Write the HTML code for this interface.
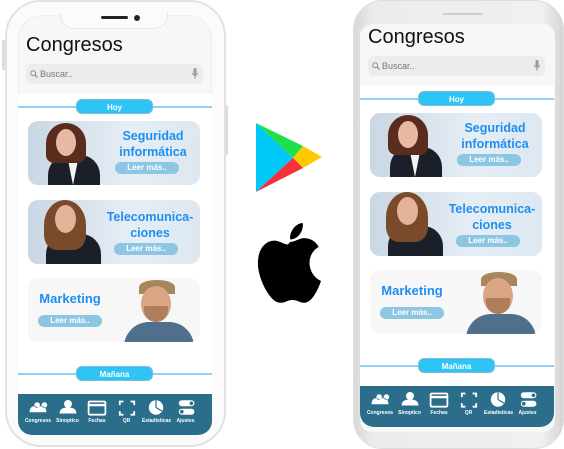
<!DOCTYPE html>
<html><head><meta charset="utf-8"><style>
*{margin:0;padding:0;box-sizing:border-box}
body{width:564px;height:449px;background:#fff;position:relative;overflow:hidden;font-family:"Liberation Sans",sans-serif}
.abs{position:absolute}
.scr{position:absolute;width:194px;height:405px}
.title{position:absolute;left:8px;top:4px;font-size:20px;color:#111}
.search{position:absolute;left:8px;top:34px;width:177px;height:20px;background:#ececec;border-radius:6px;font-size:9px;color:#777;padding:5px 0 0 14px}
.white{position:absolute;left:0;top:64px;width:194px;height:300px;background:#fff}
.line{position:absolute;left:0;width:194px;height:2px;background:#8fd0f5}
.pill{position:absolute;left:58px;width:77px;height:15px;background:#2ec4f5;border-radius:6px;color:#fff;font-size:8px;font-weight:bold;text-align:center;line-height:15px;border:1px solid #7fb9d8}
.card{position:absolute;left:10px;width:172px;height:64px;border-radius:10px;overflow:hidden;background:linear-gradient(90deg,#c9d7e4,#e6eef5 60%,#dce8f2)}
.card.w{background:#f7f7f8}
.ct{position:absolute;color:#1e8ff0;font-weight:bold;font-size:12.5px;text-align:center;line-height:16px}
.btn{position:absolute;height:12px;border-radius:6px;background:#8dc6e3;color:#fff;font-size:8px;font-weight:bold;text-align:center;line-height:12px}
.head{position:absolute;border-radius:50%}
.bar{position:absolute;left:0;top:364px;width:194px;height:41px;background:#2a6e8c;border-radius:0 0 14px 14px}
.ic{position:absolute;top:5px;width:28px;text-align:center;color:#fff;font-size:5px;font-weight:bold}
.ic svg{display:block;margin:0 auto 2px}
</style></head><body>

<div class="abs" style="left:5px;top:0;width:221px;height:447px;border:2px solid #e2e2e2;border-radius:36px;background:#fbfbfb"></div>
<div class="abs" style="left:2px;top:40px;width:3px;height:30px;background:#ddd"></div>
<div class="abs" style="left:225px;top:105px;width:3px;height:50px;background:#ddd"></div>
<div class="abs" style="left:18px;top:15px;width:194px;height:420px;background:#f7f7f7;border-radius:24px;overflow:hidden;border:1px solid #eee"></div>
<div class="abs" style="left:60px;top:13px;width:108px;height:16px;background:#fbfbfb;border-radius:0 0 14px 14px;border:1px solid #e6e6e6;border-top:none"></div>
<div class="abs" style="left:101px;top:16px;width:27px;height:3px;background:#222;border-radius:2px"></div>
<div class="abs" style="left:134px;top:15px;width:6px;height:6px;background:#223;border-radius:50%"></div>

<div class="abs" style="left:353px;top:0;width:211px;height:449px;border-radius:30px;background:linear-gradient(90deg,#d8d8d8,#ececec 10%,#f0f0f0 90%,#d5d5d5);border:1px solid #ddd"></div>
<div class="abs" style="left:443px;top:13px;width:40px;height:2px;background:#ccc;border-radius:1px"></div>
<div class="abs" style="left:360px;top:24px;width:195px;height:408px;background:#f7f7f7;border-radius:12px"></div>

<div class="scr" style="left:18px;top:30px" id="s1">
<div class="title">Congresos</div>
<div class="search"><svg class="abs" style="left:4px;top:6px" width="8" height="8" viewBox="0 0 8 8"><circle cx="3.2" cy="3.2" r="2.4" fill="none" stroke="#888" stroke-width="1"/><path d="M5 5L7.5 7.5" stroke="#888" stroke-width="1.2"/></svg>Buscar..<svg class="abs" style="right:5px;top:4px" width="6" height="12" viewBox="0 0 6 12"><rect x="1.5" y="0" width="3" height="7" rx="1.5" fill="#999"/><path d="M.5 5a2.5 2.5 0 0 0 5 0M3 8v3" stroke="#999" fill="none"/></svg></div>
<div class="white"></div>
<div class="line" style="top:76px"></div><div class="pill" style="top:69px">Hoy</div>
<div class="card" style="top:91px">
 <div class="abs" style="left:20px;top:34px;width:52px;height:40px;background:#1b1f2a;border-radius:20px 20px 0 0"></div>
 <div class="abs" style="left:39px;top:34px;width:12px;height:30px;background:#f4f4f4;clip-path:polygon(0 0,100% 0,50% 100%)"></div>
 <div class="abs" style="left:18px;top:2px;width:40px;height:40px;background:#5a2c1e;border-radius:50% 50% 20% 20%"></div>
 <div class="head" style="left:28px;top:8px;width:20px;height:27px;background:#e8b9a2"></div>
 <div class="ct" style="left:80px;top:7px;width:90px">Seguridad<br>informática</div>
 <div class="btn" style="left:87px;top:41px;width:64px">Leer más..</div>
</div>
<div class="card" style="top:170px">
 <div class="abs" style="left:18px;top:34px;width:55px;height:40px;background:#1b1f2a;border-radius:20px 20px 0 0"></div>
 <div class="abs" style="left:16px;top:0;width:42px;height:50px;background:#7a4a2a;border-radius:50% 50% 30% 30%"></div>
 <div class="head" style="left:27px;top:5px;width:21px;height:28px;background:#e3b299"></div>
 <div class="ct" style="left:70px;top:9px;width:104px">Telecomunica-<br>ciones</div>
 <div class="btn" style="left:86px;top:43px;width:64px">Leer más..</div>
</div>
<div class="card w" style="top:248px">
 <div class="abs" style="left:96px;top:44px;width:70px;height:30px;background:#4f6f8c;border-radius:25px 25px 0 0"></div>
 <div class="abs" style="left:111px;top:2px;width:36px;height:14px;background:#a7865e;border-radius:50% 50% 0 0"></div>
 <div class="head" style="left:113px;top:8px;width:30px;height:36px;background:#d9a585"></div>
 <div class="abs" style="left:116px;top:28px;width:24px;height:16px;background:#b07e5b;border-radius:0 0 12px 12px"></div>
 <div class="ct" style="left:8px;top:13px;width:68px;font-size:13px">Marketing</div>
 <div class="btn" style="left:10px;top:37px;width:64px">Leer más..</div>
</div>
<div class="line" style="top:343px"></div><div class="pill" style="top:336px">Mañana</div>
<div class="bar"></div>
</div>

<div class="scr" style="left:360px;top:22px" id="s2"></div>

<svg class="abs" style="left:0;top:0" width="564" height="449">
<polygon points="256,123 293,158 256,192" fill="#00c8f8"/>
<polygon points="256,123 303,146 293,158" fill="#1ee04a"/>
<polygon points="303,146 322,157 303,168 293,158" fill="#ffc800"/>
<polygon points="293,158 303,168 256,192" fill="#f5303a"/>
</svg>
<svg class="abs" style="left:256px;top:223px" width="65" height="82" viewBox="259 223 57 65" preserveAspectRatio="none">
<path d="M300 223c1 6-4 13-11 13-1-6 5-13 11-13zM289 238c4 0 8-3 12-3 5 0 10 2 13 7-12 6-10 22 2 27-3 8-8 16-13 17-5 1-7-2-12-2s-7 3-12 2c-6 0-16-14-18-27-2-13 5-22 14-22 5 0 8 3 12 3z" fill="#000"/>
</svg>

<script>
var s1=document.getElementById('s1'),s2=document.getElementById('s2');
var bar=s1.querySelector('.bar');
var items=[['Congresos','<path d="M3 11c0-4 2-5 4-5s4 1 4 5zM7 5a2.3 2.3 0 1 0 0-.1M9 11c0-4 2-5 4-5s4 1 4 5zM13 5a2.3 2.3 0 1 0 0-.1" fill="#fff"/>'],
['Sinoptico','<circle cx="10" cy="4" r="3.3" fill="#fff"/><path d="M3 12c0-4 3-5 7-5s7 1 7 5z" fill="#fff"/>'],
['Fechas','<rect x="3" y="2" width="14" height="11" rx="1" fill="none" stroke="#fff" stroke-width="1.5"/><path d="M3 5h14" stroke="#fff" stroke-width="2"/>'],
['QR','<path d="M4 5V2h3M13 2h3v3M16 10v3h-3M7 13H4v-3" fill="none" stroke="#fff" stroke-width="1.5"/>'],
['Estadisticas','<circle cx="10" cy="7" r="6" fill="#fff"/><path d="M10 7V1M10 7l5 3" stroke="#2a6e8c" stroke-width="1"/>'],
['Ajustes','<rect x="4" y="1" width="13" height="5" rx="2.5" fill="#fff"/><rect x="4" y="8" width="13" height="5" rx="2.5" fill="#fff"/><circle cx="14.5" cy="3.5" r="1.5" fill="#2a6e8c"/><circle cx="6.5" cy="10.5" r="1.5" fill="#2a6e8c"/>']];
items.forEach(function(it,i){var d=document.createElement('div');d.className='ic';d.style.left=(6+i*29.5)+'px';d.innerHTML='<svg width="24" height="17" viewBox="0 0 20 14">'+it[1]+'</svg>'+it[0];bar.appendChild(d);});
s2.innerHTML=s1.innerHTML;
</script>
</body></html>
